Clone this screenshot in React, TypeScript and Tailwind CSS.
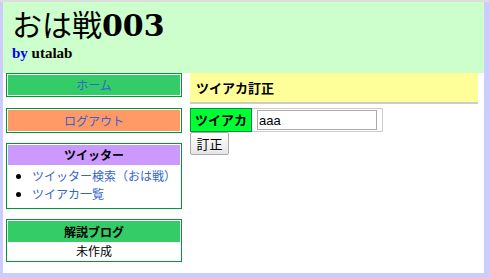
const jp = '"Noto Sans CJK JP", "Noto Sans", sans-serif';

function SideBox({ children, className = '' }: { children: React.ReactNode; className?: string }) {
  return <div className={`border border-[#009933] p-px bg-white ${className}`}>{children}</div>;
}

export default function App() {
  return (
    <div className="w-[489px] h-[278px] bg-[#ccccff] border-t-2 border-[#dddddd] pl-[3px] pr-[5px] pb-[5px]" style={{ fontFamily: jp }}>
      <div className="bg-white h-full">
        <header className="bg-[#ccffcc] h-[71px] pl-[9px] pt-[2px]">
          <h1 className="flex items-baseline text-[30px] leading-[38px] text-black">
            <span className="block" style={{ fontFamily: jp }}>おは戦</span>
            <span className="block font-bold" style={{ fontFamily: '"DejaVu Serif", serif' }}>003</span>
          </h1>
          <p className="text-[15px] leading-[16px] font-bold" style={{ fontFamily: '"Liberation Serif", serif' }}>
            <span className="text-[#0000ff]">by</span> utalab
          </p>
        </header>

        <div className="flex">
          <aside className="w-[176px] ml-[3px] text-[12px]">
            <SideBox>
              <div className="bg-[#33cc66] h-[20px] leading-[20px] text-center text-[#3366cc]">ホーム</div>
            </SideBox>
            <SideBox className="mt-[11px]">
              <div className="bg-[#ff9966] h-[21px] leading-[21px] text-center text-[#3366cc]">ログアウト</div>
            </SideBox>
            <SideBox className="mt-[10px]">
              <div className="bg-[#cc99ff] h-[20px] leading-[20px] text-center font-bold text-black">ツイッター</div>
              <ul className="list-disc pl-[24px] pt-[2px] pb-[4px] leading-[18px] text-[#3366cc]">
                <li className="marker:text-black">ツイッター検索（おは戦）</li>
                <li className="marker:text-black">ツイアカ一覧</li>
              </ul>
            </SideBox>
            <SideBox className="mt-[10px]">
              <div className="bg-[#33cc66] h-[21px] leading-[21px] text-center font-bold text-black">解説ブログ</div>
              <div className="h-[18px] leading-[18px] text-center text-black">未作成</div>
            </SideBox>
          </aside>

          <main className="flex-1 ml-[8px] mr-[6px]">
            <div className="bg-[#ffff99] h-[31px] leading-[29px] pl-[6px] border-b-2 border-[#cccccc] text-[13px] font-bold text-black">
              ツイアカ訂正
            </div>
            <table className="mt-[4px] border border-[#cccccc] border-collapse text-[13px]">
              <tbody>
                <tr>
                  <td className="bg-[#00ff33] border border-[#009933] px-[4px] h-[23px] font-bold text-black">ツイアカ</td>
                  <td className="px-[5px]">
                    <input
                      defaultValue="aaa"
                      className="w-[120px] h-[20px] border border-[#aaaaaa] px-[1px] text-[13px] text-black outline-none"
                      style={{ fontFamily: '"Liberation Sans", sans-serif' }}
                    />
                  </td>
                </tr>
              </tbody>
            </table>
            <button className="block h-[23px] w-[39px] border border-[#aaaaaa] rounded-[2px] bg-gradient-to-b from-white to-[#e6e6e6] text-[13px] text-black">
              訂正
            </button>
          </main>
        </div>
      </div>
    </div>
  );
}
